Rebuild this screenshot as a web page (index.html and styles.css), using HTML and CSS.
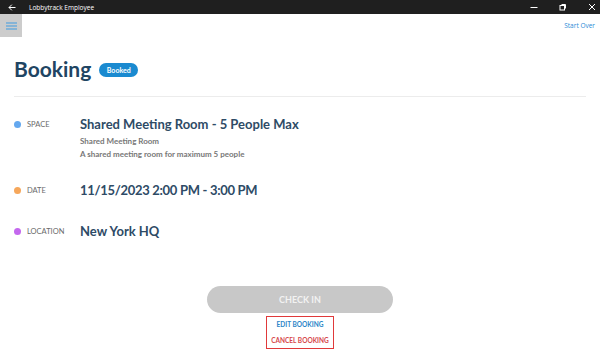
FILE: index.html
```html
<!DOCTYPE html>
<html>
<head>
<meta charset="utf-8">
<link rel="stylesheet" href="styles.css">
</head>
<body>
<div class="titlebar">
  <div class="tb-left">
    <svg class="back" width="8" height="7" viewBox="0 0 8 7"><path d="M7.5 3.5H1M3.8 0.7L1 3.5l2.8 2.8" fill="none" stroke="#fff" stroke-width="1"/></svg>
    <span class="app-title">Lobbytrack Employee</span>
  </div>
  <div class="tb-right">
    <svg width="8" height="8" viewBox="0 0 8 8"><path d="M0.5 4.5h7" stroke="#fff" stroke-width="1"/></svg>
    <svg width="8" height="8" viewBox="0 0 8 8"><rect x="1" y="2.5" width="4.5" height="4.5" fill="none" stroke="#fff"/><path d="M2.5 1.5h4v4" fill="none" stroke="#fff"/></svg>
    <svg width="8" height="8" viewBox="0 0 8 8"><path d="M1 1l6 6M7 1L1 7" stroke="#fff" stroke-width="1"/></svg>
  </div>
</div>
<div class="topbar">
  <button class="menu">
    <svg width="11" height="8" viewBox="0 0 11 8"><path d="M0 1h11M0 4h11M0 7h11" stroke="#3f9be0" stroke-width="1"/></svg>
  </button>
  <a class="start-over">Start Over</a>
</div>
<main class="content">
  <header class="heading">
    <h1>Booking</h1>
    <span class="badge">Booked</span>
  </header>
  <div class="divider"></div>
  <section class="details">
    <div class="row row-space">
      <div class="label"><span class="dot dot-blue"></span>SPACE</div>
      <div class="value">
        <div class="main">Shared Meeting Room - 5 People Max</div>
        <div class="sub sub-first">Shared Meeting Room</div>
        <div class="sub">A shared meeting room for maximum 5 people</div>
      </div>
    </div>
    <div class="row row-date">
      <div class="label"><span class="dot dot-orange"></span>DATE</div>
      <div class="value"><div class="main main-date">11/15/2023 2:00 PM - 3:00 PM</div></div>
    </div>
    <div class="row row-loc">
      <div class="label"><span class="dot dot-purple"></span>LOCATION</div>
      <div class="value"><div class="main">New York HQ</div></div>
    </div>
  </section>
  <div class="actions">
    <button class="checkin">CHECK IN</button>
    <div class="links">
      <a class="edit">EDIT BOOKING</a>
      <a class="cancel">CANCEL BOOKING</a>
    </div>
  </div>
</main>
</body>
</html>
```
FILE: styles.css
```css
* { box-sizing: border-box; }
html, body { margin: 0; padding: 0; }
body {
  width: 600px;
  height: 349px;
  overflow: hidden;
  background: #fff;
  font-family: Lato, "Open Sans", sans-serif;
  color: #2c4a66;
}
.titlebar {
  height: 14px;
  background: #1f1f1f;
  display: flex;
  align-items: center;
  justify-content: space-between;
  color: #fff;
  font-family: "Open Sans", "Noto Sans", sans-serif;
}
.tb-left { display: flex; align-items: center; }
.back { margin-left: 8px; margin-right: 13px; }
.app-title { font-size: 6.5px; }
.tb-right { display: flex; align-items: center; gap: 21px; margin-right: 4px; }
.tb-right svg { display: block; }
.topbar {
  height: 23px;
  display: flex;
  align-items: center;
  justify-content: space-between;
}
.menu {
  width: 22px;
  height: 23px;
  border: 0;
  padding: 0;
  background: #cccccc;
  display: flex;
  align-items: center;
  justify-content: center;
}
.menu svg { display: block; }
.start-over {
  font-family: "Open Sans", sans-serif;
  font-size: 6.5px;
  color: #2b8ad6;
  margin-right: 5px;
}
.content { padding: 0 14px; }
.heading {
  display: flex;
  align-items: center;
  gap: 8px;
  margin-top: 20px;
  height: 24px;
}
h1 {
  margin: 0;
  font-size: 21px;
  font-weight: 700;
  color: #1f4563;
  line-height: 24px;
}
.badge {
  background: #1a8ad0;
  color: #fff;
  font-size: 7px;
  font-weight: 700;
  border-radius: 8px;
  padding: 0 7.5px;
  height: 14px;
  line-height: 14px;
  margin-top: 2px;
}
.divider {
  height: 1px;
  background: #ececec;
  margin-top: 15px;
}
.details { padding-top: 20px; }
.row { display: flex; }
.label {
  width: 66px;
  display: flex;
  align-items: center;
  height: 14px;
  font-size: 7.5px;
  color: #6a6a6a;
}
.dot {
  width: 7px;
  height: 7px;
  border-radius: 50%;
  margin-right: 6px;
}
.dot-blue { background: #64a8ef; }
.dot-orange { background: #f6a75b; }
.dot-purple { background: #c468ee; }
.value .main {
  font-size: 13px;
  font-weight: 700;
  color: #2e4b66;
  line-height: 14px;
}
.value .main-date { letter-spacing: -0.3px; }
.value .sub {
  font-size: 8px;
  font-weight: 700;
  color: #777777;
  line-height: 13px;
}
.value .sub-first { margin-top: 4px; }
.row-date { margin-top: 22px; }
.row-loc { margin-top: 27px; }
.actions {
  display: flex;
  flex-direction: column;
  align-items: center;
  margin-top: 48px;
}
.checkin {
  width: 186px;
  height: 27px;
  border: 0;
  border-radius: 14px;
  background: #c8c8c8;
  color: #f2f2f2;
  font-family: Lato, sans-serif;
  font-weight: 700;
  font-size: 9px;
}
.links {
  margin-top: 3px;
  width: 68px;
  border: 1px solid #e0393a;
  display: flex;
  flex-direction: column;
  align-items: center;
  padding: 3px 0 2px;
  gap: 6px;
}
.links a {
  font-size: 6.5px;
  font-weight: 700;
  line-height: 10px;
}
.edit { color: #2b85c7; }
.cancel { color: #d6474b; }
```
